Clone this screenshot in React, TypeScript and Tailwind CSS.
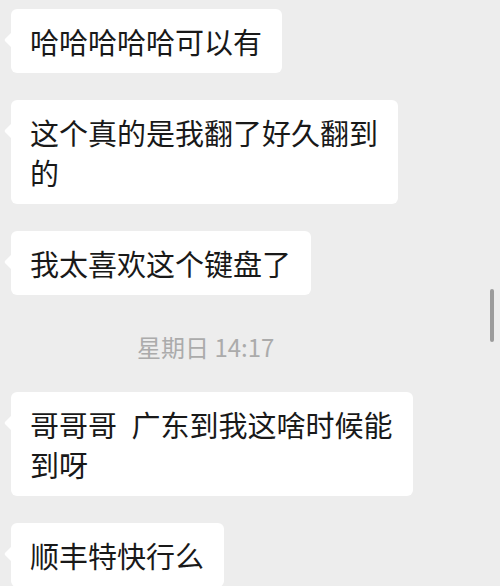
import React from "react";

type Item =
  | { kind: "msg"; lines: string[] }
  | { kind: "time"; text: string };

const items: Item[] = [
  { kind: "msg", lines: ["哈哈哈哈哈可以有"] },
  { kind: "msg", lines: ["这个真的是我翻了好久翻到", "的"] },
  { kind: "msg", lines: ["我太喜欢这个键盘了"] },
  { kind: "time", text: "星期日 14:17" },
  { kind: "msg", lines: ["哥哥哥\u2002广东到我这啥时候能", "到呀"] },
  { kind: "msg", lines: ["顺丰特快行么"] },
];

function Bubble({ lines }: { lines: string[] }) {
  return (
    <div className="pl-[11px]">
      <div className="relative inline-block rounded-[6px] bg-white pl-[19px] pr-[20px] py-[12px] text-[29px] leading-[40px] text-[#191919]">
        {/* tail */}
        <svg
          className="absolute left-[-7px] top-[23px]"
          width="8"
          height="16"
          viewBox="0 0 8 16"
        >
          <path d="M8 0 L1.2 6.8 Q0 8 1.2 9.2 L8 16 Z" fill="#ffffff" />
        </svg>
        {lines.map((l, i) => (
          <div key={i} className="whitespace-pre">
            {l}
          </div>
        ))}
      </div>
    </div>
  );
}

export default function App() {
  return (
    <div
      className="relative h-[586px] w-[500px] overflow-hidden bg-[#ededed]"
      style={{ fontFamily: '"Noto Sans CJK SC", "Noto Sans", sans-serif' }}
    >
      <div className="flex flex-col gap-[27px] pt-[9px]">
        {items.map((it, i) =>
          it.kind === "msg" ? (
            <Bubble key={i} lines={it.lines} />
          ) : (
            <div
              key={i}
              className="mt-[10px] h-[33px] pl-[137px] text-[24px] leading-[30px] text-[#ababab]"
            >
              {it.text}
            </div>
          )
        )}
      </div>

      {/* scroll indicator */}
      <div className="absolute right-[6px] top-[289px] h-[53px] w-[4px] rounded-full bg-[#9c9c9c]" />
    </div>
  );
}
